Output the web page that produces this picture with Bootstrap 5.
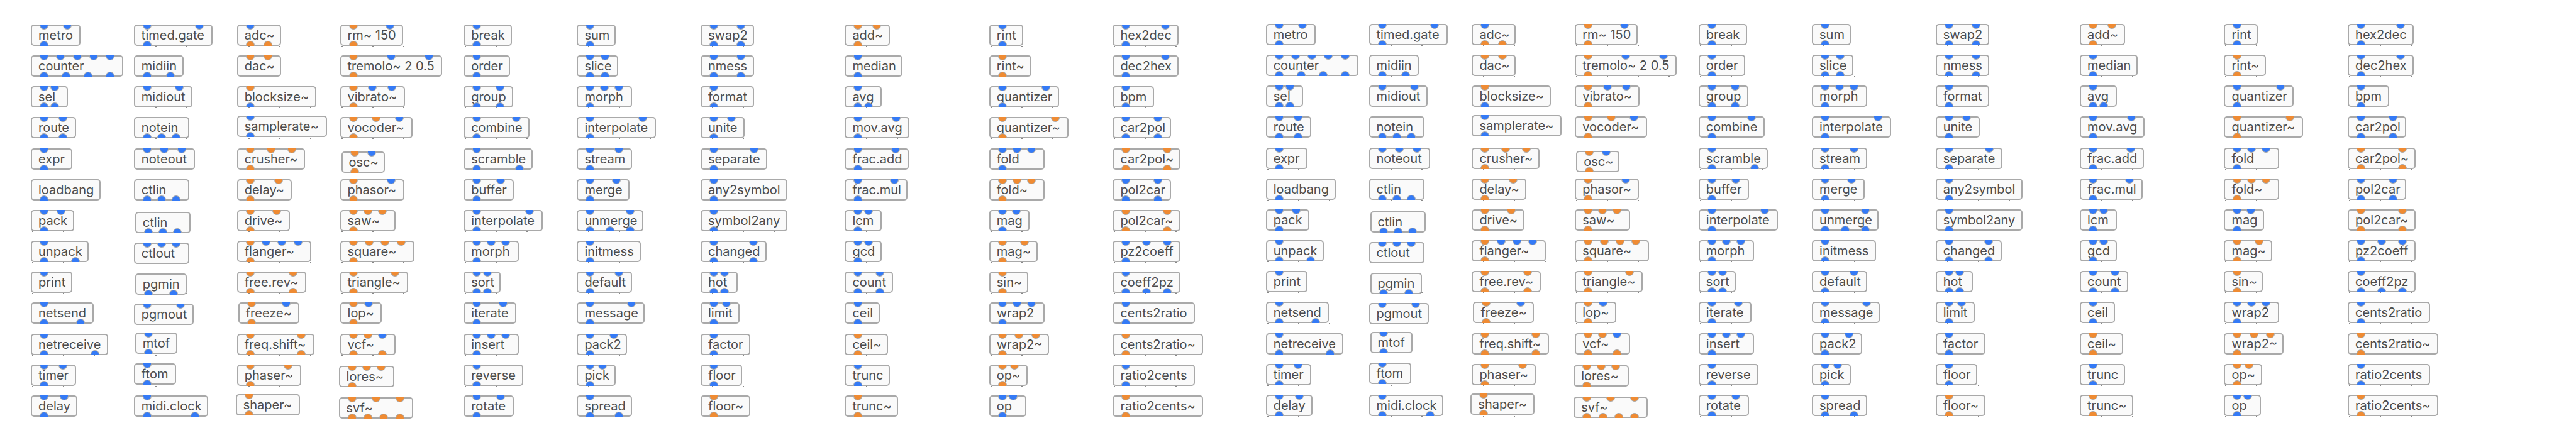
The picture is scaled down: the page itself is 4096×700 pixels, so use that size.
<!DOCTYPE html>
<html lang="en">
<head>
<meta charset="utf-8">
<meta name="viewport" content="width=device-width, initial-scale=1">
<title>Object overview</title>
<link href="https://cdn.jsdelivr.net/npm/bootstrap@5.3.0/dist/css/bootstrap.min.css" rel="stylesheet">
<style>
  body { background: #fff; color: #4c4c4c; font-family: Inter, "Liberation Sans", sans-serif; }
  .patch { display: grid; grid-template-columns: 2397fr 2543fr; padding-left: 49px; }
  .sheet { display: grid; grid-auto-flow: column; grid-template-rows: repeat(13, minmax(0, 1fr)); padding: 39px 0 22px; }
  .sheet-a { grid-template-columns: 200fr 200fr 200fr 240fr 220fr 240fr 280fr 280fr 240fr 297fr; }
  .sheet-b { grid-template-columns: 200fr 200fr 200fr 240fr 220fr 240fr 280fr 280fr 240fr 443fr; padding: 38px 0 23px; }
  .sheet > div { min-width: 0; }
  .node { height: 34px; padding: 0 10px; background: #fafafa; border: 2px solid #a9a9a9; border-radius: 5px; font-size: 20px; line-height: 30px; white-space: nowrap; }
  .ports { left: -2px; right: -2px; padding: 0 14px; }
  .ports-in { top: -2px; }
  .ports-out { bottom: -2px; }
  .port { width: 14px; height: 8px; border: 1px solid #a9a9a9; background: #347af6; }
  .port-signal { background: #ef8b33; }
  .ports-in .port { border-top: 0; border-radius: 0 0 7px 7px; }
  .ports-out .port { border-bottom: 0; border-radius: 7px 7px 0 0; }
  /* canvas grid points that show under a node */
  .gridpoints { height: 1px; background: linear-gradient(90deg, #888 2px, transparent 2px) 0 0 / 49px 1px repeat-x; }
</style>
</head>
<body>
<main class="patch min-vh-100">
  <section class="sheet sheet-a" aria-label="Objects"></section>
  <section class="sheet sheet-b" aria-label="Objects, second copy"></section>
</main>
<script src="https://cdn.jsdelivr.net/npm/bootstrap@5.3.0/dist/js/bootstrap.bundle.min.js"></script>
<script>
// name | width | inlets | outlets | x shift | y shift   (c = control, s = signal)
// start: distance from the column's edge to its first grid point
const zoom = 0.8192;
const columns = [
  { start: 2, nodes: `metro|96|cc|c
counter|180|ccccc|cccc
sel|72|cc|cc
route|88|cc|cc
expr|80|c|c
loadbang|136||c
pack|84|cc|c
unpack|112|c|cc
print|80|c|
netsend|122|c|cc
netreceive|150|c|cc
timer|88|cc|c
delay|90|cc|c` },
  { start: 42, nodes: `timed.gate|152|cc|c
midiin|96||cc
midiout|114|cc|
notein|108||ccc
noteout|118|ccc|
ctlin|108||ccc
ctlin|108||ccc|2|4
ctlout|108|ccc||0|4
pgmin|100||cc|2|4
pgmout|116|cc||0|2
mtof|82|c|c|2|-2
ftom|82|c|c|0|-2
midi.clock|144|c|cc` },
  { start: 22, nodes: `adc~|86|c|ss
dac~|86|ss|
blocksize~|154|s|c
samplerate~|174|c|c|0|-2
crusher~|132|sss|s
delay~|106|ss|s
drive~|102|ss|s
flanger~|144|sccc|s
free.rev~|134|ss|ss
freeze~|118|sc|s|2|0
freq.shift~|150|ss|ss
phaser~|124|ss|s
shaper~|124|s|s|-2|-2` },
  { start: 2, nodes: `rm~ 150|122|sc|s
tremolo~ 2 0.5|198|scc|s
vibrato~|126|scc|s
vocoder~|140|ssc|s
osc~|84|sc|s|2|6
phasor~|124|sc|s
saw~|108|sss|s
square~|144|ssss|s
triangle~|132|ss|s
lop~|80|sc|s
vcf~|108|ssc|ss
lores~|108|sss|s|-2|2
svf~|144|sss|ssss|-2|4` },
  { start: 2, nodes: `break|94|c|c
order|90|c|c
group|96|cc|cc
combine|128|cc|c
scramble|134|c|cc
buffer|98|cc|c
interpolate|154|cc|c
morph|108|ccc|c
sort|72|cc|cc
iterate|102|cc|c
insert|108|ccc|c
reverse|116|c|c
rotate|98|cc|c` },
  { start: 22, nodes: `sum|76|c|c
slice|80|cc|cc
morph|108|ccc|c
interpolate|154|cc|c
stream|108|cc|c
merge|102|cc|c
unmerge|130|cc|ccc
initmess|124|c|c
default|108|cc|c
message|132|cc|c
pack2|98|cc|c
pick|76|cc|c
spread|108|c|cc` },
  { start: 22, nodes: `swap2|104|cc|cc
nmess|104|cc|cc
format|104|c|c
unite|86|cc|c
separate|130|cc|c
any2symbol|168|c|c
symbol2any|168|c|c
changed|128|cc|cc
hot|72|cc|cc
limit|76|cc|c
factor|96|c|c
floor|80|c|c
floor~|96|s|s` },
  { start: 42, nodes: `add~|88|ss|s
median|112|c|c
avg|72|c|cc
mov.avg|126|cc|c
frac.add|124|cc|c
frac.mul|122|cc|c
lcm|72|cc|c
gcd|72|cc|c
count|94|cc|cc
ceil|68|c|c
ceil~|84|s|s
trunc|88|c|c
trunc~|104|s|s` },
  { start: 2, nodes: `rint|66|c|c
rint~|82|s|s
quantizer|136|cc|c
quantizer~|154|ss|s
fold|108|ccc|c
fold~|108|sss|s
mag|78|cc|c
mag~|94|ss|s
sin~|76|s|s
wrap2|108|ccc|c
wrap2~|116|sss|s
op~|74|ss|s
op|72|cc|c` },
  { start: 2, nodes: `hex2dec|128|cc|c
dec2hex|128|cc|c
bpm|80|c|c
car2pol|114|cc|cc
car2pol~|132|ss|ss
pol2car|114|cc|cc
pol2car~|132|ss|ss
pz2coeff|132|ccc|c
coeff2pz|132|c|ccc
cents2ratio|160|c|c
cents2ratio~|176|s|s
ratio2cents|160|c|c
ratio2cents~|176|s|s` }
];

const px = n => Math.round(n * zoom) + 'px';
const ports = (kinds, side) => kinds
  ? `<div class="ports ports-${side} position-absolute d-flex justify-content-between">` +
    [...kinds].map(k => `<span class="port${k === 's' ? ' port-signal' : ''}"></span>`).join('') + '</div>'
  : '';

function cell(line, start, row, col) {
  const [name, width, ins, outs, x = 0, y = 0] = line.split('|');
  const place = +x || +y ? `;left:${px(x)};top:${px(y)}` : '';
  const points = col === 0 && row < 4 ? '' :
    `<div class="gridpoints" style="width:${px(+width + 4 - start)};margin-left:${px(start)}"></div>`;
  return `<div><div class="node position-relative" style="width:${px(width)}${place}">${name}` +
    ports(ins, 'in') + ports(outs, 'out') + `</div>${points}</div>`;
}

const html = columns.map((c, col) =>
  c.nodes.split('\n').map((line, row) => cell(line, c.start, row, col)).join('')).join('');
document.querySelectorAll('.sheet').forEach(s => { s.innerHTML = html; });
</script>
</body>
</html>
